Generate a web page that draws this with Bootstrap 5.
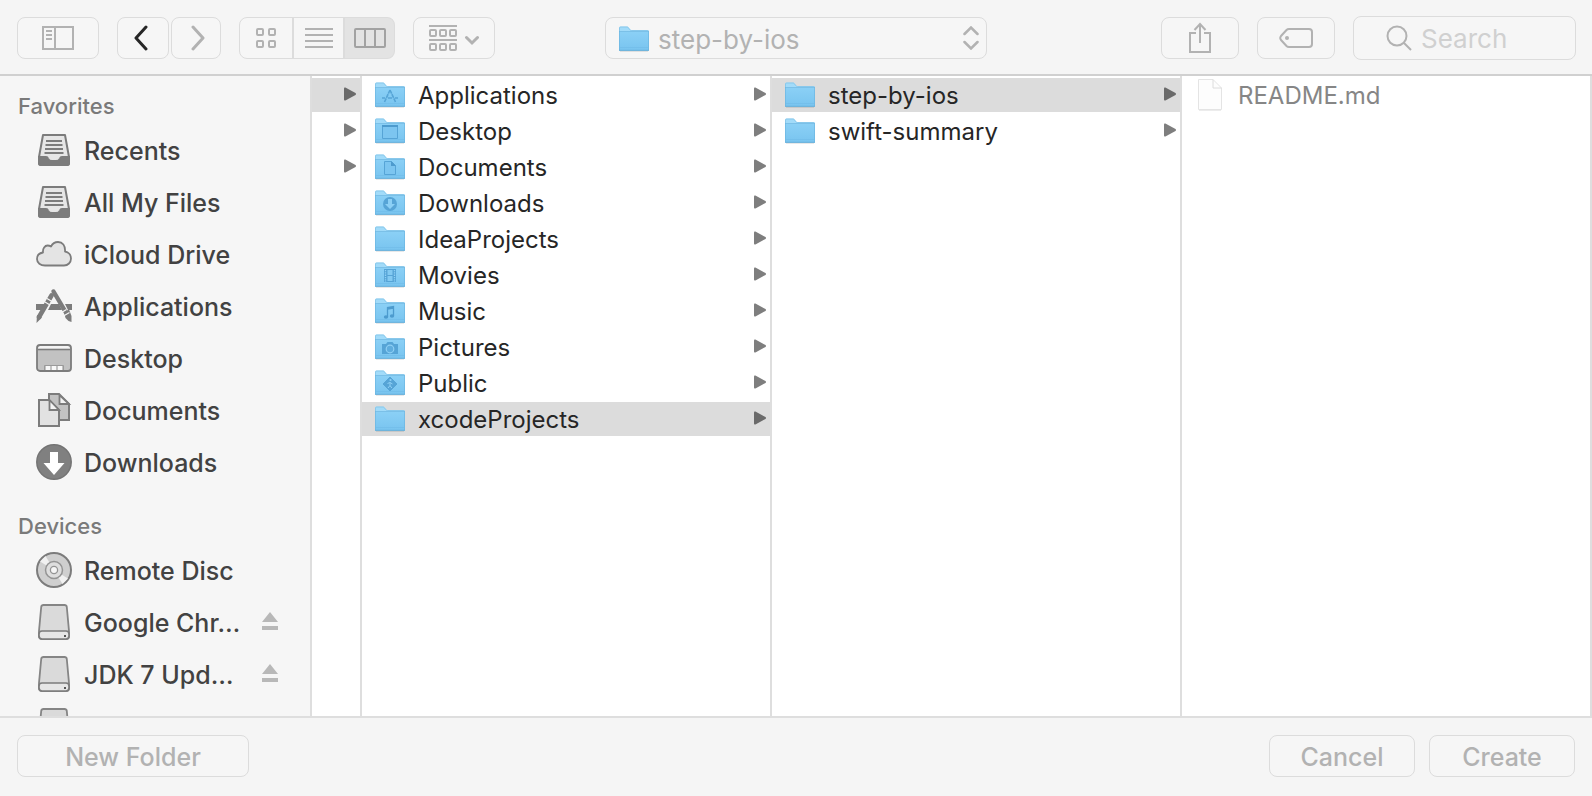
<!DOCTYPE html>
<html lang="en">
<head>
<meta charset="utf-8">
<meta name="viewport" content="width=device-width, initial-scale=1">
<title>step-by-ios</title>
<link href="https://cdn.jsdelivr.net/npm/bootstrap@5.3.0/dist/css/bootstrap.min.css" rel="stylesheet">
<style>
  body { font-family: Inter, "Liberation Sans", sans-serif; background: #f5f5f5; color: #262626; }
  svg { display: block; flex: none; }
  a { text-decoration: none; color: inherit; }
  .line { fill: none; stroke: currentColor; stroke-width: 2; }

  /* toolbar */
  .toolbar { display: grid; grid-template-columns: 1fr 382px 1fr; align-items: center; height: 76px; padding: 2px 16px 0; border-bottom: 2px solid #d0d0d0; }
  .tool-row { gap: 18px; padding-left: 1px; }
  .history { gap: 2px; }
  .tool, .path-box, .search-box { height: 42px; border: 1px solid #dcdcdc; border-radius: 8px; background: #f6f6f6; color: #b2b2b2; }
  .tool { display: flex; align-items: center; justify-content: center; padding: 0; width: 82px; font-size: 25px; line-height: 40px; }
  .tool:hover, .tool:active { border-color: #dcdcdc !important; }
  .tool.back { width: 52px; color: #262626; }
  .tool.forward { width: 50px; }
  .tool.side { width: 78px; }
  .views .tool { width: 52px; }
  .views .tool.first { width: 54px; }
  .views .tool + .tool { border-left: 2px solid #dcdcdc; }
  .views .tool.chosen { background: #e3e3e3; color: #a2a2a2; }
  .path-box svg { position: absolute; top: 8px; pointer-events: none; }
  .path-box .mark-folder { left: 13px; }
  .path-box .mark-steps { right: 7px; }
  .path-box select { appearance: none; border: 0; background: none; width: 100%; height: 40px; padding: 2px 32px 0 52px; color: #b2b2b2; font-size: 26px; outline: 0; }
  .search-box { width: 223px; height: 44px; padding-left: 32px; gap: 9px; }
  .search-box input { border: 0; background: none; width: 120px; min-width: 0; padding: 2px 0 0; font-size: 26px; line-height: 40px; outline: 0; color: #b2b2b2; }
  .search-box input::placeholder { color: #d0d0d0; opacity: 1; }

  /* sidebar */
  .places { width: 312px; background: #f6f6f6; border-right: 2px solid #dedede; color: #424242; }
  .places h2 { margin: 0; padding: 12px 0 0 18px; font-size: 22px; line-height: 36px; font-weight: 500; color: #7a7a7a; }
  .places h2.later { padding-top: 20px; }
  .place { height: 52px; padding: 0 32px 0 36px; gap: 12px; font-size: 25px; font-weight: 500; line-height: 50px; color: #424242; }
  .place span, .place a { padding-top: 2px; }
  .place svg { color: #7c7c7c; }
  .eject { border: 0; background: none; padding: 0; }
  .place .eject svg { color: #b8b8b8; }

  /* columns */
  .pane { background: #fff; border-right: 2px solid #dedede; padding-top: 2px; }
  .pane.deep { flex: 1 1 0; min-width: 0; }
  .pane.edge { width: 50px; }
  .entry { height: 34px; margin-bottom: 2px; padding: 0 4px 0 13px; gap: 13px; font-size: 24px; line-height: 32px; color: #262626; }
  .entry span { padding-top: 2px; }
  .entry.picked { background: #dcdcdc; }
  .entry.file { color: #868686; }
  .entry .arrow { color: #7e7e7e; }
  .entry.picked .arrow { color: #6a6a6a; }

  .bottom { height: 80px; padding: 0 17px 2px; border-top: 2px solid #dedede; gap: 14px; }
  .bottom .tool { width: 146px; padding-top: 2px; line-height: 38px; font-weight: 500; }
  .bottom .tool.wide { width: 232px; }
</style>
</head>
<body>
<svg width="0" height="0" class="position-absolute" aria-hidden="true">
  <defs>
    <linearGradient id="blue" x1="0" y1="0" x2="0" y2="1">
      <stop offset="0" stop-color="#8bd0f6"/><stop offset="1" stop-color="#78c4ef"/>
    </linearGradient>
  </defs>
  <symbol id="folder" viewBox="0 0 30 26">
    <path d="M1 25h28" stroke="#000" stroke-opacity=".18"/>
    <path d="M0 2q0-1.500 1.500-1.500H8q1 0 1.600.8l1.400 2q.5.700 1.500.7h16q1.500 0 1.500 1.500V8H0z" fill="#a2dbf9"/>
    <path d="M.5 6V2q0-1 1-1H8q.8 0 1.300.7l1.500 2q.6.800 1.600.8h16.100q1 0 1 1" fill="none" stroke="#7fc0e6" stroke-opacity=".7"/>
    <path d="M0 5.500h30V24q0 .8-1 .8H1q-1 0-1-.8z" fill="url(#blue)"/>
    <path d="M0 5.500h30M.5 5.500V24M29.500 5.500V24" stroke="#69b2de" stroke-opacity=".6" fill="none"/>
    <path d="M0 24.300h30" stroke="#68afd9" stroke-width="1"/>
    <path d="M1 21.500h28" stroke="#6fbbe8" stroke-opacity=".6"/>
  </symbol>
  <symbol id="arrow" viewBox="0 0 12 16"><path d="M0 1.500Q0 0 1.400.6L11.500 6q1 1 0 2L1.400 13.400Q0 14 0 12.500z" fill="currentColor"/></symbol>
  <symbol id="tray" viewBox="0 0 36 36">
    <path d="M7 3h22l4 22v6q0 2-2 2H5q-2 0-2-2v-6z" fill="#e6e6e6" stroke="currentColor" stroke-width="2" stroke-linejoin="round"/>
    <path d="M3 25h7q1.500 0 2 1.500Q13 29 16 29h4q3 0 4-2.500.5-1.500 2-1.500h7v6q0 2-2 2H5q-2 0-2-2z" fill="currentColor" stroke="currentColor" stroke-width="2"/>
    <path d="M10 9h16M9.500 13h17M9 17h18M8.500 21h19" stroke="currentColor" stroke-width="1.800"/>
  </symbol>
  <symbol id="cloud" viewBox="0 0 36 36">
    <path d="M9 29.500C4.500 29.500 1 27 1 23c0-3.500 2.500-6 6-6.500C6.500 12.500 9 9.500 11.500 9.500q2 0 3.500 1C16.500 7.500 19 6 22 6c4.500 0 7.500 3.500 7 9.500 3.500.5 6 3.500 6 7 0 4-3 7-7 7z" fill="#e4e4e4" stroke="currentColor" stroke-width="1.800" stroke-linejoin="round"/>
  </symbol>
  <symbol id="apps" viewBox="0 0 36 36">
    <path d="M0 16h10l-3 6H0zM15 16h8l3 6H12zM29 16h7v6h-4z" fill="currentColor"/>
    <path d="M17.500 3.500 32 28" stroke="currentColor" stroke-width="4.400" stroke-linecap="round"/>
    <path d="M28 24l5-2.500 2.500 6.500V34q-4-1-6-4z" fill="currentColor"/>
    <path d="M15.500 7.500 3 29" stroke="currentColor" stroke-width="4.600" stroke-linecap="round"/>
    <path d="M1 27l5 2.500-5.500 5.500z" fill="currentColor"/>
    <path d="M11 10.500l5 3M9 14l5 3M25.500 24.500l5-3M27.500 28l6-3.500" stroke="#f6f6f6" stroke-width="1.200"/>
  </symbol>
  <symbol id="desktop" viewBox="0 0 36 36">
    <rect x="1" y="5" width="34" height="26" rx="3" fill="#c2c2c2"/>
    <path d="M2 9V8q0-2 2-2h28q2 0 2 2v1z" fill="#f4f4f4"/>
    <path d="M2 9.500h32" stroke="currentColor" stroke-width="1.600"/>
    <rect x="1" y="5" width="34" height="26" rx="3" fill="none" stroke="currentColor" stroke-width="1.800"/>
    <path d="M8.500 30v-4.500h19V30" fill="none" stroke="#9a9a9a"/>
    <path d="M10 26h4v4h-4zM16 26h4v4h-4zM22 26h4v4h-4z" fill="#f8f8f8"/>
  </symbol>
  <symbol id="papers" viewBox="0 0 36 36">
    <path d="M13 2h10l10 10v16H13z" fill="#c2c2c2" stroke="currentColor" stroke-width="2"/>
    <path d="M23.500 3v9H33z" fill="#f4f4f4" stroke="currentColor" stroke-width="1.800"/>
    <path d="M3 8h10l10 10v16H3z" fill="#e2e2e2" stroke="currentColor" stroke-width="2"/>
    <path d="M13.500 8v10H23z" fill="#f4f4f4" stroke="currentColor" stroke-width="1.800"/>
  </symbol>
  <symbol id="down" viewBox="0 0 36 36">
    <circle cx="18" cy="18" r="17.200" fill="#808080" stroke="#747474" stroke-width="1.500"/>
    <path d="M14 8h8v11h6.500L18 31 7.500 19H14z" fill="#fff"/>
  </symbol>
  <symbol id="disc" viewBox="0 0 36 36">
    <circle cx="18" cy="18" r="17" fill="#cfcfcf" stroke="currentColor" stroke-width="2"/>
    <path d="M18 18 4 9.500 9.500 4zM18 18 32 26.500 26.500 32z" fill="#f1f1f1"/>
    <circle cx="18" cy="18" r="8.500" fill="#dedede" stroke="#949494" stroke-width="1.500"/>
    <circle cx="18" cy="18" r="3.600" fill="#f6f6f6" stroke="#949494" stroke-width="1.300"/>
  </symbol>
  <symbol id="drive" viewBox="0 0 36 36">
    <path d="M7.500 1h21q2 0 2.300 2L33 27v5q0 3-3 3H6q-3 0-3-3v-5L5.200 3Q5.500 1 7.500 1z" fill="#dadada" stroke="#858585" stroke-width="1.800"/>
    <rect x="3" y="27" width="30" height="8" rx="3" fill="#e6e6e6" stroke="#7c7c7c" stroke-width="1.700"/>
    <path d="M28 31h2v2h-2z" fill="#555"/>
  </symbol>
  <symbol id="ejector" viewBox="0 0 16 20"><path d="M8 0l8 10H0zM0 14h16v4H0z" fill="currentColor"/></symbol>
</svg>

<div class="vh-100 d-flex flex-column overflow-hidden">
  <header class="toolbar flex-shrink-0">
    <div class="tool-row d-flex align-items-center">
      <button type="button" class="btn tool" aria-label="Sidebar">
        <svg width="32" height="24" class="line"><path d="M1 1h30v22H1zM13 1v22M4 5h6M4 9h6M4 13h6"/></svg>
      </button>
      <div class="history d-flex">
        <button type="button" class="btn tool back" aria-label="Back">
          <svg width="18" height="26" class="line"><path d="M12 2 2 13l10 11" stroke-width="3" stroke-linecap="round" stroke-linejoin="round"/></svg>
        </button>
        <button type="button" class="btn tool forward" aria-label="Forward">
          <svg width="18" height="26" class="line"><path d="M6 2l10 11L6 24" stroke-width="3" stroke-linecap="round" stroke-linejoin="round"/></svg>
        </button>
      </div>
      <div class="btn-group views" role="group" aria-label="View">
        <button type="button" class="btn tool first" aria-label="Icons">
          <svg width="20" height="20" class="line"><rect x="1" y="1" width="6" height="6" rx="1"/><rect x="13" y="1" width="6" height="6" rx="1"/><rect x="1" y="13" width="6" height="6" rx="1"/><rect x="13" y="13" width="6" height="6" rx="1"/></svg>
        </button>
        <button type="button" class="btn tool" aria-label="List">
          <svg width="28" height="20" class="line"><path d="M0 1h28M0 7h28M0 13h28M0 19h28"/></svg>
        </button>
        <button type="button" class="btn tool chosen" aria-label="Columns" aria-pressed="true">
          <svg width="32" height="20" class="line"><path d="M1 2q0-1 1-1h28q1 0 1 1v16q0 1-1 1H2q-1 0-1-1zM11 1v18M21 1v18"/></svg>
        </button>
      </div>
      <button type="button" class="btn tool" aria-label="Arrange">
        <svg width="50" height="28" class="line"><path d="M0 2h28M0 16h28"/><rect x="1" y="6" width="6" height="6" rx="1"/><rect x="11" y="6" width="6" height="6" rx="1"/><rect x="21" y="6" width="6" height="6" rx="1"/><rect x="1" y="20" width="6" height="6" rx="1"/><rect x="11" y="20" width="6" height="6" rx="1"/><rect x="21" y="20" width="6" height="6" rx="1"/><path d="M37.500 13.500l5.500 5.500 5.500-5.500" stroke-width="3" stroke-linecap="round"/></svg>
      </button>
    </div>

    <div class="path-box position-relative">
      <svg class="mark-folder" width="30" height="26"><use href="#folder"/></svg>
      <select aria-label="Location"><option>step-by-ios</option></select>
      <svg class="mark-steps line" width="16" height="24"><path d="M1.500 8 8 1.500 14.500 8M1.500 16 8 22.500 14.500 16" stroke-width="2.500" stroke-linecap="round"/></svg>
    </div>

    <div class="tool-row d-flex align-items-center justify-content-end">
      <button type="button" class="btn tool side" aria-label="Share">
        <svg width="24" height="32" viewBox="0 0 24 32" class="line"><path d="M8 11H2v19h20V11h-6M12 21V2M6.500 8 12 2l5.500 6"/></svg>
      </button>
      <button type="button" class="btn tool side" aria-label="Tags">
        <svg width="34" height="20" class="line"><path d="M10 1h20q3 0 3 3v12q0 3-3 3H10Q8.500 19 7.500 18L2 12Q.5 10 2 8l5.500-6Q8.500 1 10 1z"/><circle cx="8" cy="10" r="2" fill="currentColor" stroke="none"/></svg>
      </button>
      <label class="search-box d-flex align-items-center">
        <svg width="26" height="26" class="line"><circle cx="11" cy="11" r="9.500"/><path d="M18 18l7 7"/></svg>
        <input type="search" placeholder="Search" aria-label="Search">
      </label>
    </div>
  </header>

  <main class="d-flex flex-grow-1 overflow-hidden">
    <nav class="places flex-shrink-0 overflow-hidden" aria-label="Places">
      <h2>Favorites</h2>
      <a href="#" class="place d-flex align-items-center"><svg width="36" height="36"><use href="#tray"/></svg><span>Recents</span></a>
      <a href="#" class="place d-flex align-items-center"><svg width="36" height="36"><use href="#tray"/></svg><span>All My Files</span></a>
      <a href="#" class="place d-flex align-items-center"><svg width="36" height="36"><use href="#cloud"/></svg><span>iCloud Drive</span></a>
      <a href="#" class="place d-flex align-items-center"><svg width="36" height="36"><use href="#apps"/></svg><span>Applications</span></a>
      <a href="#" class="place d-flex align-items-center"><svg width="36" height="36"><use href="#desktop"/></svg><span>Desktop</span></a>
      <a href="#" class="place d-flex align-items-center"><svg width="36" height="36"><use href="#papers"/></svg><span>Documents</span></a>
      <a href="#" class="place d-flex align-items-center"><svg width="36" height="36"><use href="#down"/></svg><span>Downloads</span></a>
      <h2 class="later">Devices</h2>
      <a href="#" class="place d-flex align-items-center"><svg width="36" height="36"><use href="#disc"/></svg><span>Remote Disc</span></a>
      <div class="place d-flex align-items-center"><svg width="36" height="36"><use href="#drive"/></svg><a href="#">Google Chr…</a><button type="button" class="eject ms-auto" aria-label="Eject"><svg width="16" height="20"><use href="#ejector"/></svg></button></div>
      <div class="place d-flex align-items-center"><svg width="36" height="36"><use href="#drive"/></svg><a href="#">JDK 7 Upd…</a><button type="button" class="eject ms-auto" aria-label="Eject"><svg width="16" height="20"><use href="#ejector"/></svg></button></div>
      <a href="#" class="place d-flex align-items-center" aria-label="Drive"><svg width="36" height="36"><use href="#drive"/></svg></a>
    </nav>

    <section class="pane edge flex-shrink-0">
      <a href="#" class="entry picked d-flex align-items-center" aria-label="Folder"><svg class="arrow ms-auto" width="12" height="16"><use href="#arrow"/></svg></a>
      <a href="#" class="entry d-flex align-items-center" aria-label="Folder"><svg class="arrow ms-auto" width="12" height="16"><use href="#arrow"/></svg></a>
      <a href="#" class="entry d-flex align-items-center" aria-label="Folder"><svg class="arrow ms-auto" width="12" height="16"><use href="#arrow"/></svg></a>
    </section>

    <section class="pane deep">
      <a href="#" class="entry d-flex align-items-center"><svg width="30" height="26"><use href="#folder"/><path d="M15 8 9.500 20M15 8l5.500 12M7 16h3m3 0h4m3 0h3" fill="none" stroke="#56a4d6" stroke-width="1.600" stroke-dasharray="4 .6"/></svg><span>Applications</span><svg class="arrow ms-auto" width="12" height="16"><use href="#arrow"/></svg></a>
      <a href="#" class="entry d-flex align-items-center"><svg width="30" height="26"><use href="#folder"/><path d="M7.500 7.500h15v13h-15z" fill="#7cc5f0" stroke="#56a4d6"/><path d="M7 8h16" stroke="#4d9bce" stroke-width="2"/></svg><span>Desktop</span><svg class="arrow ms-auto" width="12" height="16"><use href="#arrow"/></svg></a>
      <a href="#" class="entry d-flex align-items-center"><svg width="30" height="26"><use href="#folder"/><path d="M9.500 7.500h7l4 4v9h-11z" fill="#7cc5f0" stroke="#56a4d6"/><path d="M16 7v5h5z" fill="#4d9bce"/></svg><span>Documents</span><svg class="arrow ms-auto" width="12" height="16"><use href="#arrow"/></svg></a>
      <a href="#" class="entry d-flex align-items-center"><svg width="30" height="26"><use href="#folder"/><circle cx="15" cy="14" r="7" fill="#56a4d6"/><path d="M13 9h4v5h3l-5 5-5-5h3z" fill="#8bcff5"/></svg><span>Downloads</span><svg class="arrow ms-auto" width="12" height="16"><use href="#arrow"/></svg></a>
      <a href="#" class="entry d-flex align-items-center"><svg width="30" height="26"><use href="#folder"/></svg><span>IdeaProjects</span><svg class="arrow ms-auto" width="12" height="16"><use href="#arrow"/></svg></a>
      <a href="#" class="entry d-flex align-items-center"><svg width="30" height="26"><use href="#folder"/><path d="M9 7h12v13H9z" fill="#56a4d6"/><path d="M12.500 8h5v5h-5zM12.500 14h5v5h-5z" fill="#83caf2"/><path d="M10.500 8v12M19.500 8v12" stroke="#8fd0f5" stroke-width="1.300" stroke-dasharray="1.300 1"/></svg><span>Movies</span><svg class="arrow ms-auto" width="12" height="16"><use href="#arrow"/></svg></a>
      <a href="#" class="entry d-flex align-items-center"><svg width="30" height="26"><use href="#folder"/><path d="M12.500 19V9.500l6-1V18M12.500 11l6-1" fill="none" stroke="#4d9bce" stroke-width="1.300"/><ellipse cx="11" cy="19" rx="2.200" ry="1.800" fill="#4d9bce"/><ellipse cx="17" cy="18" rx="2.200" ry="1.800" fill="#4d9bce"/></svg><span>Music</span><svg class="arrow ms-auto" width="12" height="16"><use href="#arrow"/></svg></a>
      <a href="#" class="entry d-flex align-items-center"><svg width="30" height="26"><use href="#folder"/><path d="M7 10h4l1.500-2h5l1.500 2h4v10H7z" fill="#56a4d6"/><circle cx="15" cy="15" r="3.800" fill="#5fadde" stroke="#8fd0f5" stroke-width="1.200"/></svg><span>Pictures</span><svg class="arrow ms-auto" width="12" height="16"><use href="#arrow"/></svg></a>
      <a href="#" class="entry d-flex align-items-center"><svg width="30" height="26"><use href="#folder"/><path d="M15 7l7 7-7 7-7-7z" fill="#56a4d6" stroke="#56a4d6" stroke-linejoin="round"/><circle cx="15.500" cy="10" r="1.100" fill="#8fd0f5"/><path d="M12.500 13.500l2.500-1 2.500 1.500M15 12.500v3l1.800 2.500M15 15.500l-2 2.500" fill="none" stroke="#8fd0f5"/></svg><span>Public</span><svg class="arrow ms-auto" width="12" height="16"><use href="#arrow"/></svg></a>
      <a href="#" class="entry picked d-flex align-items-center"><svg width="30" height="26"><use href="#folder"/></svg><span>xcodeProjects</span><svg class="arrow ms-auto" width="12" height="16"><use href="#arrow"/></svg></a>
    </section>

    <section class="pane deep">
      <a href="#" class="entry picked d-flex align-items-center"><svg width="30" height="26"><use href="#folder"/></svg><span>step-by-ios</span><svg class="arrow ms-auto" width="12" height="16"><use href="#arrow"/></svg></a>
      <a href="#" class="entry d-flex align-items-center"><svg width="30" height="26"><use href="#folder"/></svg><span>swift-summary</span><svg class="arrow ms-auto" width="12" height="16"><use href="#arrow"/></svg></a>
    </section>

    <section class="pane deep">
      <a href="#" class="entry file d-flex align-items-center"><svg width="30" height="32"><path d="M3.500.5H18l8.500 8.500v21.500h-23z" fill="#fdfdfd" stroke="#e4e4e4"/><path d="M18 .5V9h8.500" fill="none" stroke="#dcdcdc"/><path d="M4 31.500h22" stroke="#ececec"/></svg><span>README.md</span></a>
    </section>
  </main>

  <footer class="bottom d-flex align-items-center flex-shrink-0">
    <button type="button" class="btn tool wide me-auto">New Folder</button>
    <button type="button" class="btn tool">Cancel</button>
    <button type="button" class="btn tool">Create</button>
  </footer>
</div>
<script src="https://cdn.jsdelivr.net/npm/bootstrap@5.3.0/dist/js/bootstrap.bundle.min.js"></script>
</body>
</html>
